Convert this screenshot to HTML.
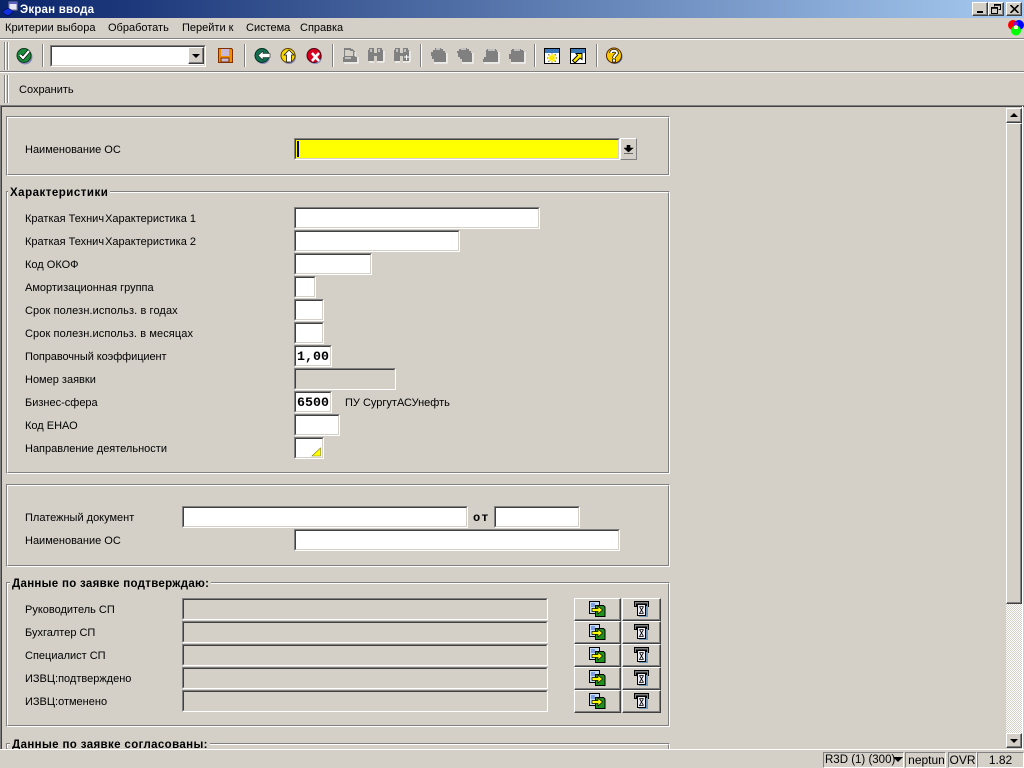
<!DOCTYPE html>
<html lang="ru"><head><meta charset="utf-8"><title>Экран ввода</title>
<style>
html,body{margin:0;padding:0;width:1024px;height:768px;overflow:hidden;background:#d4d0c8}
body{position:relative;font:11px "Liberation Sans",sans-serif;color:#000}
div,span,svg{position:absolute;box-sizing:border-box}
.t{white-space:nowrap;line-height:14px;height:14px}
.m{white-space:nowrap;line-height:14px;top:21px}
.f{height:22px;background:#fff;border-style:solid;border-width:1px;border-color:#808080 #fff #fff #808080}
.f:before{content:"";position:absolute;left:0;top:0;right:0;bottom:0;border-style:solid;border-width:1px;border-color:#404040 #d4d0c8 #d4d0c8 #404040}
.d{background:#d4d0c8}
.box{left:6px;width:664px;border:1px solid;border-color:#808080 #fff #fff #808080}
.box:before{content:"";position:absolute;left:0;top:0;right:0;bottom:0;border:1px solid;border-color:#fff #808080 #808080 #fff}
.h{font-weight:bold;font-size:11.5px;line-height:14px;height:14px;background:#d4d0c8;white-space:nowrap;padding:0 2px;letter-spacing:.3px}
.mono{font:bold 13.3px/16px "Liberation Mono",monospace;left:2px;top:3px;white-space:nowrap;z-index:1}
.sep{width:2px;top:44px;height:23px;background:linear-gradient(90deg,#808080 50%,#fff 50%)}
.hl{top:42px;height:28px;left:4px;width:5px;background:linear-gradient(90deg,#808080 0 1px,#fff 1px 2px,#d4d0c8 2px 3px,#808080 3px 4px,#fff 4px 5px)}
.btn{background:#d4d0c8;border:1px solid;border-color:#fff #404040 #404040 #fff;box-shadow:inset -1px -1px 0 #808080}
.wb{top:2px;height:14px;background:#d4d0c8;border:1px solid;border-color:#fff #404040 #404040 #fff;box-shadow:inset -1px -1px 0 #808080}
.st{top:752px;height:16px;border:1px solid;border-color:#808080 #fff #fff #808080;font:12px/15px "Liberation Sans",sans-serif;white-space:nowrap;text-align:center}
.i{width:18px;height:18px}
.c{shape-rendering:crispEdges}
</style></head><body>

<svg width="0" height="0" style="left:0;top:0">
<defs>
<g id="dis1"><path d="M1 5h2V3h2V1h6v1h2v2h2v2h1v9H4v-3H2V9H1z" fill="#808080"/><path d="M4 16h13V6M6 2h4" fill="none" stroke="#fff"/></g>
<g id="dis2"><path d="M1 4h2V2h2V1h6v1h2v2h2v2h1v9H6v-3H4v-2H2V6H1z" fill="#808080"/><path d="M6 16h11V6M5 2h5" fill="none" stroke="#fff"/></g>
<g id="go"><path d="M.5 1.500h10v12H.5z" fill="#c8dcf8" stroke="#000"/><path d="M6.500 5.500h8l1.500 1.500v9.500H6.500z" fill="#209020" stroke="#000"/><path d="M2 4h4M2 6h4" stroke="#3060d0"/><path d="M3 8.500h6V6l4.500 4L9 14v-2.500H3z" fill="#ffff00" stroke="#000" stroke-width=".7"/></g>
<g id="del"><path d="M.5 1.500h14v5h-2V4h-10v2.500h-2z" fill="#808080" stroke="#000"/><path d="M3.500 4.500h8v11h-8z" fill="#f0f0f8" stroke="#000"/><path d="M12 6h2v11H5v-1h7z" fill="#7098b8"/><path d="M5.500 6.500h4M9.500 6.500L5.500 13.500h4M5.500 6.500l4 7" fill="none" stroke="#000" stroke-width=".8"/></g>
</defs></svg>

<!-- title bar -->
<div style="left:0;top:0;width:1024px;height:18px;background:linear-gradient(90deg,#0a246a,#a6caf0)"></div>
<svg style="left:2px;top:1px" width="16" height="16"><rect x="7" y="1" width="8" height="8" fill="#e8e8f8" stroke="#8080a0"/><rect x="7" y="1" width="8" height="2" fill="#6060c0"/><path d="M1 10l5-3 5 3v1l-5 4-5-3z" fill="#1030e0" stroke="#000050" stroke-width=".6"/></svg>
<div class="t" style="left:20px;top:3px;color:#fff;font-weight:bold;font-size:11.5px;letter-spacing:.2px">Экран ввода</div>
<div class="wb" style="left:972px;width:16px"><div style="left:4px;top:8px;width:6px;height:2px;background:#000"></div></div>
<div class="wb" style="left:988px;width:16px"><svg style="left:2px;top:1px" width="11" height="10"><path d="M3.500 2.500V.5h6v5h-2M.5 3.500h6v6h-6z" fill="none" stroke="#000"/><path d="M3 1h7M0 4h7" stroke="#000" stroke-width="1.400"/></svg></div>
<div class="wb" style="left:1006px;width:16px"><svg style="left:3px;top:2px" width="9" height="8"><path d="M.5 0l8 8M8.500 0l-8 8" stroke="#000" stroke-width="1.600"/></svg></div>

<!-- menu -->
<div class="m" style="left:5px;letter-spacing:.07px">Критерии выбора</div>
<div class="m" style="left:108px">Обработать</div>
<div class="m" style="left:182px">Перейти к</div>
<div class="m" style="left:246px">Система</div>
<div class="m" style="left:300px">Справка</div>
<svg style="left:1007px;top:19px" width="17" height="17"><circle cx="6" cy="6" r="5" fill="#ff0000"/><circle cx="12" cy="6" r="5" fill="#0000ff"/><circle cx="9" cy="11.500" r="5" fill="#00ff00"/><path d="M7 3h4v3H7z" fill="#a000c0"/><path d="M7 7l2-1 2 1v3H7z" fill="#ffffc0"/></svg>

<div style="left:0;top:38px;width:1024px;height:1px;background:#808080"></div>
<div style="left:0;top:39px;width:1024px;height:1px;background:#fff"></div>
<div style="left:0;top:71px;width:1024px;height:1px;background:#808080"></div>
<div style="left:0;top:72px;width:1024px;height:1px;background:#fff"></div>

<!-- toolbar -->
<div class="hl"></div>
<div class="sep" style="left:42px"></div><div class="sep" style="left:244px"></div><div class="sep" style="left:332px"></div>
<div class="sep" style="left:420px"></div><div class="sep" style="left:534px"></div><div class="sep" style="left:596px"></div>

<svg class="i" style="left:16px;top:47px"><circle cx="9" cy="10" r="7.500" fill="#8888b8"/><circle cx="8" cy="8.500" r="7" fill="#1a8a3a" stroke="#0a3a1a"/><path d="M4 8l3 3 6-7" fill="none" stroke="#000" stroke-width="3.600"/><path d="M4 8l3 3 6-7" fill="none" stroke="#fff" stroke-width="2.200"/></svg>
<div class="f" style="left:50px;top:45px;width:156px"></div>
<div class="btn" style="left:188px;top:47px;width:16px;height:17px"><div style="left:3px;top:6px;width:0;height:0;border:4px solid transparent;border-top:4px solid #000;border-bottom:0"></div></div>
<svg class="i c" style="left:217px;top:47px"><path d="M1.500 1.500h13l1 1v13h-14z" fill="#f09000" stroke="#803000"/><rect x="4" y="2" width="8" height="7" fill="#c8b8d8"/><rect x="4" y="11" width="8" height="4" fill="#c8b8d8" stroke="#803000"/></svg>
<svg class="i" style="left:254px;top:47px"><circle cx="9" cy="10" r="7" fill="#8888b8"/><circle cx="8" cy="8.500" r="7" fill="#107050" stroke="#003020"/><path d="M16 6.500H9V4L4 8.500 9 13v-2.500h7z" fill="#fff" stroke="#202020" stroke-width=".6"/></svg>
<svg class="i" style="left:280px;top:47px"><circle cx="9" cy="10" r="7" fill="#8888b8"/><circle cx="8" cy="8.500" r="7" fill="#f8d800" stroke="#604000"/><path d="M9 3l5 5h-2.500v7h-5V8H4z" fill="#fff" stroke="#202020" stroke-width=".8"/></svg>
<svg class="i" style="left:306px;top:47px"><circle cx="9" cy="10" r="7" fill="#8888b8"/><circle cx="8" cy="8.500" r="7" fill="#d80020" stroke="#500010"/><path d="M6 6l7 8M13 6l-7 8" stroke="#fff" stroke-width="2.600"/></svg>

<svg class="i c" style="left:342px;top:47px"><path d="M2 1h7v1h2v1h1v1h1v6H2z" fill="#808080"/><path d="M3 3h5v1h3v5H3z" fill="#d4d0c8"/><path d="M1 10h14v5H1z" fill="#808080"/><path d="M2 16h14v-6M13 5v4M3 11h6" fill="none" stroke="#fff"/></svg>
<svg class="i c" style="left:367px;top:47px"><path d="M2 1h5v5h3V1h5v2h1v11h-6V9H7v5H1V3h1z" fill="#808080"/><path d="M2 15h5M10 15h7M17 4v11M4 2v3M12 2v3" fill="none" stroke="#fff"/></svg>
<svg class="i c" style="left:393px;top:47px"><path d="M2 1h5v5h3V1h5v2h1v11h-6V9H7v5H1V3h1z" fill="#808080"/><path d="M2 15h5M10 15h7M17 4v11M4 2v3M12 2v3M11 10h5M13.500 8v5" fill="none" stroke="#fff"/></svg>
<svg class="i c" style="left:430px;top:47px"><use href="#dis1"/></svg>
<svg class="i c" style="left:456px;top:47px"><use href="#dis2"/></svg>
<svg class="i c" style="left:482px;top:47px"><path d="M5 2h9v1h1v2h1v10H1v-3h1v-2h2V3h1z" fill="#808080"/><path d="M2 16h15V5M6 3h7" fill="none" stroke="#fff"/></svg>
<svg class="i c" style="left:508px;top:47px"><path d="M4 2h9v1h2v1h1v11H3v-3H1V7h2V3h1z" fill="#808080"/><path d="M3 16h14V5M6 3h6" fill="none" stroke="#fff"/></svg>

<svg class="i" style="left:544px;top:48px"><rect x=".5" y=".5" width="15" height="15" fill="#fff" stroke="#000"/><rect x="1" y="1" width="14" height="4" fill="#3878b8"/><path d="M8 5.500v9M3 10h10M4.500 6.500l7 7M11.500 6.500l-7 7" stroke="#000" stroke-width="1"/><path d="M8 6v8M3.500 10h9M5 7l6 6M11 7l-6 6" stroke="#ffe800" stroke-width="1.500"/></svg>
<svg class="i" style="left:570px;top:48px"><rect x=".5" y=".5" width="15" height="15" fill="#fff" stroke="#000"/><rect x="1" y="1" width="14" height="4" fill="#3878b8"/><path d="M2.500 12.500l5-5-1.500-2h6v6l-2-1.500-5 5z" fill="#ffe800" stroke="#000"/></svg>
<svg class="i" style="left:606px;top:47px"><circle cx="9" cy="9.500" r="7.500" fill="#5070a0"/><circle cx="8" cy="8.500" r="7.500" fill="#f8c800" stroke="#502000"/><path d="M5 6c0-3 6-3 6 0 0 2-3 2-3 5" fill="none" stroke="#000" stroke-width="3.400"/><path d="M5 6c0-3 6-3 6 0 0 2-3 2-3 5" fill="none" stroke="#fff" stroke-width="2"/><rect x="6.500" y="12" width="3" height="3" fill="#fff" stroke="#000" stroke-width=".7"/></svg>

<!-- app toolbar -->
<div class="hl" style="top:75px;height:28px"></div>
<div class="t" style="left:19px;top:83px">Сохранить</div>

<!-- main area borders -->
<div style="left:0;top:105px;width:1024px;height:1px;background:#808080"></div>
<div style="left:0;top:106px;width:1024px;height:1px;background:#404040"></div>
<div style="left:0;top:106px;width:1px;height:644px;background:#808080"></div>
<div style="left:1px;top:106px;width:1px;height:644px;background:#404040"></div>
<div style="left:1022px;top:106px;width:1px;height:644px;background:#fff"></div>
<div style="left:0;top:749px;width:1024px;height:1px;background:#fff"></div>

<!-- scrollbar -->
<div class="btn" style="left:1006px;top:108px;width:16px;height:15px"><div style="left:3px;top:4px;width:0;height:0;border:4px solid transparent;border-bottom:4px solid #000;border-top:0"></div></div>
<div class="btn" style="left:1006px;top:123px;width:16px;height:481px"></div>
<div style="left:1006px;top:604px;width:16px;height:129px;background:repeating-conic-gradient(#fff 0 25%,#d4d0c8 0 50%) 0 0/2px 2px"></div>
<div class="btn" style="left:1006px;top:733px;width:16px;height:15px"><div style="left:3px;top:5px;width:0;height:0;border:4px solid transparent;border-top:4px solid #000;border-bottom:0"></div></div>

<!-- frame 1 -->
<div class="box" style="top:116px;height:60px"></div>
<div class="t" style="left:25px;top:143px">Наименование ОС</div>
<div class="f" style="left:294px;top:138px;width:326px;background:#ff0"></div>
<div style="left:297px;top:141px;width:2px;height:16px;background:#000080;z-index:2"></div>
<div class="btn" style="left:620px;top:138px;width:17px;height:22px;border-color:#fff #808080 #808080 #fff;box-shadow:none"><svg style="left:3px;top:6px" width="10" height="10"><path d="M3 0h3v3h3L4.500 7 0 3h3zM0 8.500h9" fill="#000" stroke="#000" stroke-width=".6"/></svg></div>

<!-- frame 2 -->
<div class="box" style="top:191px;height:283px"></div>
<div class="h" style="left:8px;top:186px;letter-spacing:.5px">Характеристики</div>
<div class="t" style="left:25px;top:212px">Краткая Технич<span style="position:static;margin-left:1px">Характеристика 1</span></div>
<div class="t" style="left:25px;top:235px">Краткая Технич<span style="position:static;margin-left:1px">Характеристика 2</span></div>
<div class="t" style="left:25px;top:258px">Код ОКОФ</div>
<div class="t" style="left:25px;top:281px">Амортизационная группа</div>
<div class="t" style="left:25px;top:304px;letter-spacing:.11px">Срок полезн.использ. в годах</div>
<div class="t" style="left:25px;top:327px;letter-spacing:.1px">Срок полезн.использ. в месяцах</div>
<div class="t" style="left:25px;top:350px;letter-spacing:-.08px">Поправочный коэффициент</div>
<div class="t" style="left:25px;top:373px">Номер заявки</div>
<div class="t" style="left:25px;top:396px">Бизнес-сфера</div>
<div class="t" style="left:25px;top:419px">Код ЕНАО</div>
<div class="t" style="left:25px;top:442px">Направление деятельности</div>
<div class="f" style="left:294px;top:207px;width:246px"></div>
<div class="f" style="left:294px;top:230px;width:166px"></div>
<div class="f" style="left:294px;top:253px;width:78px"></div>
<div class="f" style="left:294px;top:276px;width:22px"></div>
<div class="f" style="left:294px;top:299px;width:30px"></div>
<div class="f" style="left:294px;top:322px;width:30px"></div>
<div class="f" style="left:294px;top:345px;width:38px"><span class="mono">1,00</span></div>
<div class="f d" style="left:294px;top:368px;width:102px"></div>
<div class="f" style="left:294px;top:391px;width:38px"><span class="mono">6500</span></div>
<div class="t" style="left:345px;top:396px">ПУ СургутАСУнефть</div>
<div class="f" style="left:294px;top:414px;width:46px"></div>
<div class="f" style="left:294px;top:437px;width:30px"></div>
<svg style="left:311px;top:447px;z-index:2" width="11" height="10"><path d="M9.500 1v8H1z" fill="#ff0" stroke="#808000" stroke-width=".6"/></svg>

<!-- frame 3 -->
<div class="box" style="top:484px;height:83px"></div>
<div class="t" style="left:25px;top:511px">Платежный документ</div>
<div class="t" style="left:25px;top:534px">Наименование ОС</div>
<div class="f" style="left:182px;top:506px;width:286px"></div>
<div style="left:473px;top:510px;font:bold 12px/16px 'Liberation Mono',monospace;letter-spacing:1px;white-space:nowrap">от</div>
<div class="f" style="left:494px;top:506px;width:86px"></div>
<div class="f" style="left:294px;top:529px;width:326px"></div>

<!-- frame 4 -->
<div class="box" style="top:582px;height:145px"></div>
<div class="h" style="left:10px;top:577px">Данные по заявке подтверждаю:</div>
<div class="t" style="left:25px;top:603px">Руководитель СП</div>
<div class="t" style="left:25px;top:626px">Бухгалтер СП</div>
<div class="t" style="left:25px;top:649px">Специалист СП</div>
<div class="t" style="left:25px;top:672px">ИЗВЦ:подтверждено</div>
<div class="t" style="left:25px;top:695px">ИЗВЦ:отменено</div>
<div class="f d" style="left:182px;top:598px;width:366px"></div>
<div class="f d" style="left:182px;top:621px;width:366px"></div>
<div class="f d" style="left:182px;top:644px;width:366px"></div>
<div class="f d" style="left:182px;top:667px;width:366px"></div>
<div class="f d" style="left:182px;top:690px;width:366px"></div>

<div class="btn" style="left:574px;top:598px;width:47px;height:23px"><svg class="i" style="left:14px;top:1px"><use href="#go"/></svg></div>
<div class="btn" style="left:622px;top:598px;width:39px;height:23px"><svg class="i" style="left:11px;top:1px"><use href="#del"/></svg></div>
<div class="btn" style="left:574px;top:621px;width:47px;height:23px"><svg class="i" style="left:14px;top:1px"><use href="#go"/></svg></div>
<div class="btn" style="left:622px;top:621px;width:39px;height:23px"><svg class="i" style="left:11px;top:1px"><use href="#del"/></svg></div>
<div class="btn" style="left:574px;top:644px;width:47px;height:23px"><svg class="i" style="left:14px;top:1px"><use href="#go"/></svg></div>
<div class="btn" style="left:622px;top:644px;width:39px;height:23px"><svg class="i" style="left:11px;top:1px"><use href="#del"/></svg></div>
<div class="btn" style="left:574px;top:667px;width:47px;height:23px"><svg class="i" style="left:14px;top:1px"><use href="#go"/></svg></div>
<div class="btn" style="left:622px;top:667px;width:39px;height:23px"><svg class="i" style="left:11px;top:1px"><use href="#del"/></svg></div>
<div class="btn" style="left:574px;top:690px;width:47px;height:23px"><svg class="i" style="left:14px;top:1px"><use href="#go"/></svg></div>
<div class="btn" style="left:622px;top:690px;width:39px;height:23px"><svg class="i" style="left:11px;top:1px"><use href="#del"/></svg></div>

<!-- frame 5 (clipped) -->
<div class="box" style="top:743px;height:6px;border-bottom:0"></div>
<div style="left:8px;top:745px;width:660px;height:4px;background:#d4d0c8"></div>
<div class="h" style="left:10px;top:738px;height:11px;overflow:hidden;letter-spacing:.37px">Данные по заявке согласованы:</div>
<div style="left:0;top:749px;width:1024px;height:1px;background:#fff"></div>
<div style="left:0;top:750px;width:1024px;height:18px;background:#d4d0c8"></div>

<!-- status bar -->
<div class="st" style="left:823px;width:81px;text-align:left;padding-left:1px;font-size:11.5px">R3D (1) (300)<div style="left:69px;top:4px;width:0;height:0;border:5px solid transparent;border-top:5px solid #000;border-bottom:0"></div></div>
<div class="st" style="left:905px;width:41px;padding-left:2px">neptun</div>
<div class="st" style="left:948px;width:29px">OVR</div>
<div class="st" style="left:977px;width:47px">1.82</div>
</body></html>
